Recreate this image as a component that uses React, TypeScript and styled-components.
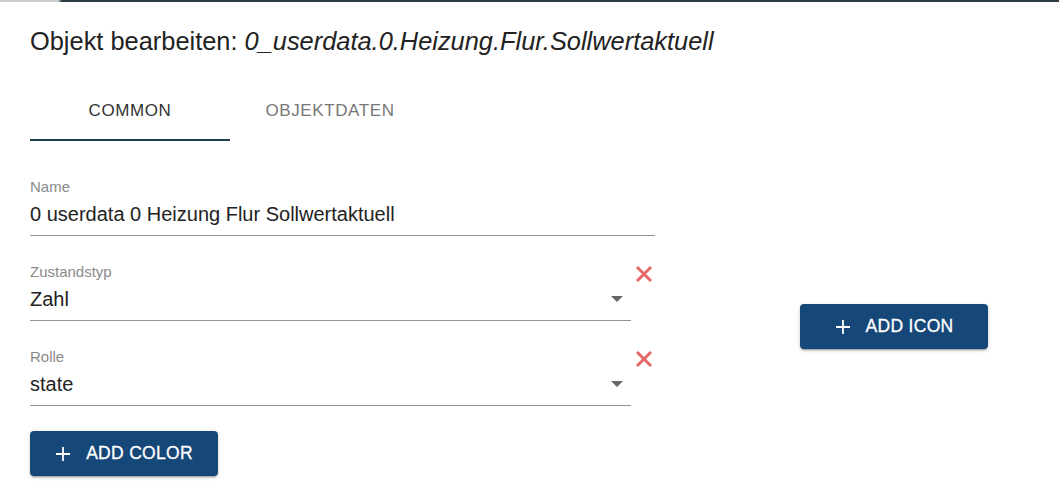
import React from 'react'
import styled, { createGlobalStyle } from 'styled-components'

const GlobalStyle = createGlobalStyle`
  html, body {
    margin: 0;
    padding: 0;
    background: #ffffff;
    font-family: "Liberation Sans", Arial, sans-serif;
  }
`

const TopEdge = styled.div`
  height: 2px;
  background: linear-gradient(to right, #c9cccd 0, #c9cccd 58px, #2b3d44 62px, #2b3d44 100%);
`

const Dialog = styled.div`
  width: 1059px;
  height: 500px;
  box-sizing: border-box;
  padding: 24px 0 0 30px;
  background: #ffffff;
`

const Title = styled.h2`
  margin: 0;
  font-size: 25.4px;
  font-weight: 400;
  line-height: 30px;
  color: #222;
`

const ObjectId = styled.span`
  font-style: italic;
`

const Tabs = styled.div`
  display: flex;
  margin-top: 25px;
  width: 400px;
`

const Tab = styled.div<{ active?: boolean }>`
  width: 200px;
  height: 60px;
  box-sizing: border-box;
  display: flex;
  align-items: center;
  justify-content: center;
  padding-top: 1px;
  font-size: 17px;
  letter-spacing: 0.6px;
  text-transform: uppercase;
  color: ${({ active }) => (active ? '#333' : '#777')};
  border-bottom: 2px solid ${({ active }) => (active ? '#1f3f52' : 'transparent')};
`

const Body = styled.div`
  display: flex;
  align-items: flex-start;
  margin-top: 37px;
`

const Fields = styled.div`
  display: flex;
  flex-direction: column;
  width: 625px;
`

const FieldRow = styled.div<{ last?: boolean }>`
  display: flex;
  align-items: flex-start;
  margin-bottom: ${({ last }) => (last ? 25 : 27)}px;
`

const Field = styled.div<{ width: number }>`
  width: ${({ width }) => width}px;
  border-bottom: 1px solid #949494;
  padding-bottom: 9px;
`

const Label = styled.div`
  font-size: 15px;
  line-height: 18px;
  color: #8a8a8a;
`

const Value = styled.div`
  display: flex;
  align-items: center;
  justify-content: space-between;
  margin-top: 6px;
  font-size: 20px;
  line-height: 24px;
  color: #222;
`

const Arrow = styled.span`
  width: 0;
  height: 0;
  margin-right: 8px;
  border-left: 6px solid transparent;
  border-right: 6px solid transparent;
  border-top: 6px solid #666;
`

const Clear = styled.span`
  display: flex;
  margin: 1px 0 0 3px;
`

const Button = styled.button`
  display: flex;
  align-items: center;
  justify-content: center;
  gap: 15px;
  width: 188px;
  height: 45px;
  padding: 0;
  border: none;
  border-radius: 4px;
  background: #164779;
  color: #fff;
  font-family: inherit;
  font-size: 17.5px;
  font-weight: 500;
  letter-spacing: 0.3px;
  -webkit-text-stroke: 0.3px #fff;
  box-shadow: 0 3px 1px -2px rgba(0, 0, 0, 0.2), 0 2px 2px 0 rgba(0, 0, 0, 0.14), 0 1px 5px 0 rgba(0, 0, 0, 0.12);
`

const Side = styled.div`
  padding: 126px 0 0 145px;
`

const Plus = () => (
  <svg width="16" height="16" viewBox="0 0 16 16">
    <path d="M8 1v14M1 8h14" stroke="#fff" strokeWidth="1.8" />
  </svg>
)

const CrossIcon = () => (
  <svg width="20" height="20" viewBox="0 0 20 20">
    <path d="M3 3l14 14M17 3L3 17" stroke="#e86868" strokeWidth="3" />
  </svg>
)

function SelectField({ label, value, last }: { label: string; value: string; last?: boolean }) {
  return (
    <FieldRow last={last}>
      <Field width={601}>
        <Label>{label}</Label>
        <Value>
          {value}
          <Arrow />
        </Value>
      </Field>
      <Clear>
        <CrossIcon />
      </Clear>
    </FieldRow>
  )
}

export default function App() {
  return (
    <>
      <GlobalStyle />
      <TopEdge />
      <Dialog>
        <Title>
          Objekt bearbeiten: <ObjectId>0_userdata.0.Heizung.Flur.Sollwertaktuell</ObjectId>
        </Title>
        <Tabs>
          <Tab active>Common</Tab>
          <Tab>Objektdaten</Tab>
        </Tabs>
        <Body>
          <Fields>
            <FieldRow>
              <Field width={625}>
                <Label>Name</Label>
                <Value>0 userdata 0 Heizung Flur Sollwertaktuell</Value>
              </Field>
            </FieldRow>
            <SelectField label="Zustandstyp" value="Zahl" />
            <SelectField label="Rolle" value="state" last />
            <Button>
              <Plus />
              ADD COLOR
            </Button>
          </Fields>
          <Side>
            <Button>
              <Plus />
              ADD ICON
            </Button>
          </Side>
        </Body>
      </Dialog>
    </>
  )
}
